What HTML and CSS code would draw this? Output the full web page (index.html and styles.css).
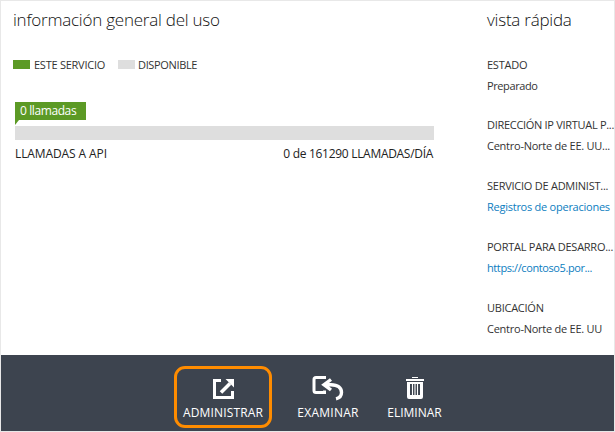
FILE: index.html
```html
<!DOCTYPE html>
<html lang="es">
<head>
<meta charset="utf-8">
<title>Información general del uso</title>
<link rel="stylesheet" href="styles.css">
</head>
<body>
<div class="page">
  <main class="content">
    <section class="usage">
      <h2>información general del uso</h2>
      <div class="legend">
        <span class="swatch used"></span><span class="label service">ESTE SERVICIO</span>
        <span class="swatch"></span><span class="label free">DISPONIBLE</span>
      </div>
      <div class="meter">
        <div class="flag">0 llamadas</div>
        <div class="bar"></div>
        <div class="caption"><span class="metric">LLAMADAS A API</span><span class="quota">0 de 161290 LLAMADAS/DÍA</span></div>
      </div>
    </section>
    <aside class="glance">
      <h2>vista rápida</h2>
      <dl>
        <div><dt class="wide">ESTADO</dt><dd class="tight">Preparado</dd></div>
        <div><dt class="tight">DIRECCIÓN IP VIRTUAL P...</dt><dd>Centro-Norte de EE. UU...</dd></div>
        <div><dt>SERVICIO DE ADMINIST...</dt><dd><a>Registros de operaciones</a></dd></div>
        <div><dt>PORTAL PARA DESARRO...</dt><dd><a class="url">https://contoso5.por...</a></dd></div>
        <div><dt>UBICACIÓN</dt><dd>Centro-Norte de EE. UU</dd></div>
      </dl>
    </aside>
  </main>
  <footer class="toolbar">
    <div class="action selected">
      <svg width="22" height="22" viewBox="0 0 22 22"><path d="M9 2.500H2.500V19.500H20.500V13" fill="none" stroke="#fff" stroke-width="3"/><path d="M9 14.500 18 5.500" stroke="#fff" stroke-width="3.600"/><path d="M13.500 1H22V9.500Z" fill="#fff"/></svg>
      <span>ADMINISTRAR</span>
    </div>
    <div class="action browse">
      <svg width="34" height="26" viewBox="0 0 34 26"><path d="M13.500 4V2.500H5Q3 2.500 3 4.500V15.500Q3 17.500 5 17.500H13.500V15.500" fill="none" stroke="#fff" stroke-width="3"/><path d="M20 4.500 13 9.700 20 15M13.500 9.700H20C27 9.700 30.500 13 30.500 17.500C30.500 21 28.500 23 25 23.800" fill="none" stroke="#fff" stroke-width="3.400"/></svg>
      <span>EXAMINAR</span>
    </div>
    <div class="action delete">
      <svg width="18" height="22" viewBox="0 0 18 22"><path d="M6 0H12V1H6ZM0 2H18V4H0Z" fill="#fff"/><path fill="#fff" fill-rule="evenodd" d="M1 5H17V20Q17 22 15 22H3Q1 22 1 20ZM4 7V18H14V7Z"/><path d="M6.500 7V18M9 7V18M11.500 7V18" stroke="#fff" stroke-width="1.100"/></svg>
      <span>ELIMINAR</span>
    </div>
  </footer>
</div>
</body>
</html>
```
FILE: styles.css
```css
* { box-sizing: border-box; }
body { margin: 0; background: #fff; color: #333; font: 11px/21px "Open Sans", "Noto Sans", sans-serif; }
.page { height: 432px; display: flex; flex-direction: column; border: 1px solid #e8e8e8; overflow: hidden; white-space: nowrap; }
.content { flex: 1; min-height: 0; display: flex; }
h2 { margin: 0; font-size: 17px; font-weight: 300; line-height: 24px; letter-spacing: -0.23px; color: #111; }
.usage { width: 433px; padding: 7px 0 0 12px; }
.legend { display: flex; align-items: center; margin-top: 22px; }
.swatch { width: 17px; height: 9px; margin-right: 4px; background: #dedede; }
.used { background: #5c9a25; }
.service { width: 84px; letter-spacing: -0.25px; }
.free { margin-left: -1px; letter-spacing: -0.35px; }
.meter { margin: 27px 0 0 2px; font-size: 12px; color: #222; }
.flag { position: relative; width: 71px; height: 18px; margin-bottom: 6px; padding-left: 5px; background: #5c9a25; color: #fff; line-height: 18px; letter-spacing: -0.4px; }
.flag::after { content: ""; position: absolute; left: 0; top: 18px; border-top: 5px solid #5c9a25; border-right: 4px solid transparent; }
.bar { width: 419px; height: 14px; background: #dedede; }
.caption { display: flex; justify-content: space-between; margin: 3px 0 0; width: 418px; }
.metric { letter-spacing: -0.1px; }
.quota { letter-spacing: -0.3px; }
.glance { margin-left: 53px; padding-top: 7px; }
dl { margin: 22px 0 0; letter-spacing: -0.25px; }
dl > div { height: 61px; }
dl > div:first-child { height: 60px; }
dd { margin: 0; }
a { color: #0b7dc0; }
.wide { letter-spacing: -0.25px; }
.tight { letter-spacing: -0.3px; }
dd.tight { letter-spacing: -0.4px; }
.url { letter-spacing: -0.4px; }
.toolbar { flex: none; height: 76px; display: flex; background: #3d444f; color: #fff; font-size: 12px; letter-spacing: 0.15px; padding-left: 173px; }
.action { display: flex; flex-direction: column; align-items: center; }
.action svg { flex: none; }
.action span { line-height: 18px; }
.selected { width: 98px; height: 62px; margin-top: 11px; padding-top: 9px; border: 3px solid #ff8c00; border-radius: 11px; }
.selected span { margin-top: 4px; }
.browse { width: 62px; margin-left: 25px; padding-top: 20px; letter-spacing: 0.25px; }
.browse span { margin-top: 3px; }
.delete { width: 55px; margin-left: 28px; padding-top: 22px; letter-spacing: 0; }
.delete span { margin-top: 5px; }
```
